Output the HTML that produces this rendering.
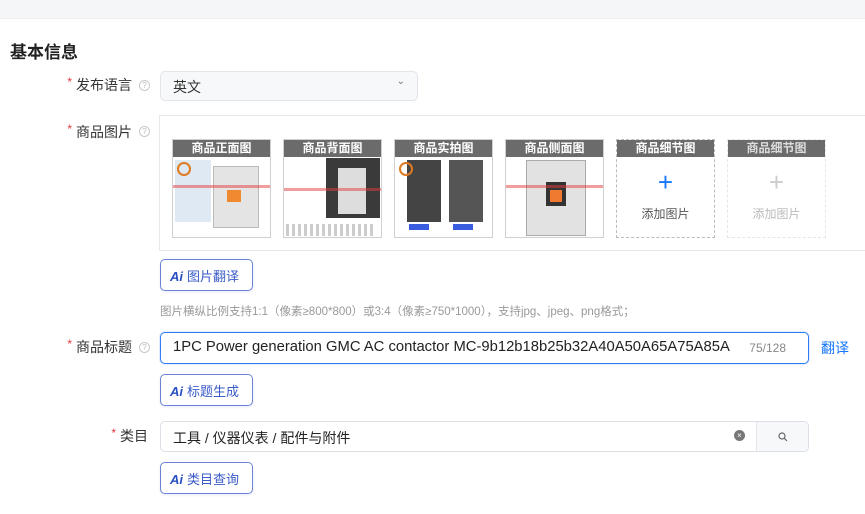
<!DOCTYPE html>
<html><head><meta charset="utf-8"><style>
*{box-sizing:border-box;margin:0;padding:0}
body{width:865px;height:514px;overflow:hidden;background:#fff;font-family:"Liberation Sans","Noto Sans CJK SC",sans-serif;color:#333;position:relative}
.abs{position:absolute}
.top{left:0;top:0;width:865px;height:19px;background:#f5f6f8;border-bottom:1px solid #eceef2}
h1{position:absolute;left:10px;top:38px;font-size:17px;font-weight:bold;color:#222}
.lab{position:absolute;font-size:14px;color:#333;text-align:right}
.lab b{color:#e4393c;font-weight:normal;margin-right:4px;font-size:12px;vertical-align:top}
.q{position:absolute;width:11px;height:11px;border:1px solid #c8c8c8;border-radius:50%;font-size:8px;color:#bbb;text-align:center;line-height:9px}
.sel{left:160px;top:71px;width:258px;height:30px;background:#f7f8fa;border:1px solid #e3e5ea;border-radius:5px;font-size:14px;padding:5px 12px;color:#333}
.panel{left:159px;top:115px;width:710px;height:136px;border:1px solid #e8e8e8;border-right:none}
.img{position:absolute;top:139px;width:99px;height:99px;border:1px solid #d0d0d0;background:#fff;overflow:hidden}
.img .h{height:17px;background:#6b6b6b;color:#fff;font-size:12px;font-weight:bold;text-align:center;line-height:17px}
.dash{border:1px dashed #bbb}
.dash2{border:1px dashed #e6e6e6}
.btn{position:absolute;left:160px;width:93px;height:32px;border:1px solid #6b83d6;border-radius:5px;font-size:13px;color:#3a5bc7;padding:6px 0 0 9px;box-shadow:0 1px 2px rgba(80,100,200,.15)}
.btn i{font-style:italic;font-weight:bold;color:#2a4fc2;margin-right:4px}
.hint{left:160px;top:303px;font-size:11.5px;color:#999}
.inp{left:160px;top:332px;width:649px;height:32px;border:1px solid #2f7cf6;border-radius:5px;font-size:14.8px;padding:6px 12px;color:#222;box-shadow:0 0 0 1px rgba(47,124,246,.15);white-space:nowrap}
.cat{left:160px;top:421px;width:649px;height:31px;border:1px solid #dcdfe6;border-radius:5px;font-size:14px;padding:6px 12px;color:#222;overflow:hidden}
</style></head><body>
<div class="abs top"></div>
<h1>基本信息</h1>

<div class="lab" style="left:60px;top:75px;width:72px"><b>*</b>发布语言</div>
<div class="q" style="left:139px;top:80px">?</div>
<div class="abs sel">英文<span style="position:absolute;right:12px;top:4px;font-size:10px;color:#777">&#8964;</span></div>

<div class="lab" style="left:60px;top:122px;width:72px"><b>*</b>商品图片</div>
<div class="q" style="left:139px;top:126px">?</div>
<div class="abs panel"></div>

<div class="img" style="left:172px"><div class="h">商品正面图</div>
<div style="position:absolute;left:2px;top:20px;width:36px;height:62px;background:#dfe9f3"></div>
<div style="position:absolute;left:4px;top:22px;width:14px;height:14px;border:2px solid #e07a20;border-radius:50%"></div>
<div style="position:absolute;left:40px;top:26px;width:46px;height:62px;background:#e4e4e4;border:1px solid #bbb"></div>
<div style="position:absolute;left:54px;top:50px;width:14px;height:12px;background:#f08a30"></div>
<div style="position:absolute;left:0;top:45px;width:99px;height:3px;background:rgba(230,60,60,.5)"></div></div>
<div class="img" style="left:283px"><div class="h">商品背面图</div>
<div style="position:absolute;left:42px;top:18px;width:54px;height:60px;background:#3a3a3a"></div>
<div style="position:absolute;left:54px;top:28px;width:28px;height:46px;background:#ddd"></div>
<div style="position:absolute;left:2px;top:84px;width:90px;height:12px;background:repeating-linear-gradient(90deg,#999 0 3px,#fff 3px 6px);opacity:.5"></div>
<div style="position:absolute;left:0;top:48px;width:99px;height:3px;background:rgba(230,60,60,.5)"></div></div>
<div class="img" style="left:394px"><div class="h">商品实拍图</div>
<div style="position:absolute;left:12px;top:20px;width:34px;height:62px;background:#444"></div>
<div style="position:absolute;left:54px;top:20px;width:34px;height:62px;background:#555"></div>
<div style="position:absolute;left:4px;top:22px;width:14px;height:14px;border:2px solid #e07a20;border-radius:50%"></div>
<div style="position:absolute;left:14px;top:84px;width:20px;height:6px;background:#3a5de0"></div>
<div style="position:absolute;left:58px;top:84px;width:20px;height:6px;background:#3a5de0"></div></div>
<div class="img" style="left:505px"><div class="h">商品侧面图</div>
<div style="position:absolute;left:20px;top:20px;width:60px;height:76px;background:#e2e2e2;border:1px solid #aaa"></div>
<div style="position:absolute;left:40px;top:42px;width:20px;height:24px;background:#333"></div>
<div style="position:absolute;left:44px;top:50px;width:12px;height:12px;background:#f07a30"></div>
<div style="position:absolute;left:0;top:45px;width:99px;height:3px;background:rgba(230,60,60,.5)"></div></div>
<div class="img dash" style="left:616px"><div class="h">商品细节图</div>
<div style="text-align:center;color:#1677ff;font-size:26px;line-height:26px;margin-top:12px">+</div>
<div style="text-align:center;font-size:12px;color:#555;margin-top:10px">添加图片</div></div>
<div class="img dash2" style="left:727px"><div class="h" style="color:#ddd">商品细节图</div>
<div style="text-align:center;color:#ccc;font-size:26px;line-height:26px;margin-top:12px">+</div>
<div style="text-align:center;font-size:12px;color:#bbb;margin-top:10px">添加图片</div></div>

<div class="btn" style="top:259px"><i>Ai</i>图片翻译</div>
<div class="abs hint">图片横纵比例支持1:1（像素≥800*800）或3:4（像素≥750*1000），支持jpg、jpeg、png格式；</div>

<div class="lab" style="left:60px;top:337px;width:72px"><b>*</b>商品标题</div>
<div class="q" style="left:139px;top:342px">?</div>
<div class="abs inp">1PC Power generation GMC AC contactor MC-9b12b18b25b32A40A50A65A75A85A<span style="position:absolute;right:22px;top:8px;font-size:12px;color:#888">75/128</span></div>
<div class="abs" style="left:821px;top:338px;font-size:14px;color:#1677ff">翻译</div>
<div class="btn" style="top:374px"><i>Ai</i>标题生成</div>

<div class="lab" style="left:90px;top:426px;width:58px"><b>*</b>类目</div>
<div class="abs cat">工具 / 仪器仪表 / 配件与附件
<span style="position:absolute;left:573px;top:8px;width:11px;height:11px;border-radius:50%;background:#777;color:#fff;font-size:8px;line-height:11px;text-align:center">×</span>
<span style="position:absolute;left:595px;top:0;width:53px;height:29px;background:#f7f8fa;border-left:1px solid #e3e5ea">
<svg width="10" height="10" viewBox="0 0 10 10" style="position:absolute;left:21px;top:10px"><circle cx="4" cy="4" r="3" fill="none" stroke="#666" stroke-width="1.2"/><path d="M6.2 6.2L9 9" stroke="#666" stroke-width="1.2"/></svg></span></div>
<div class="btn" style="top:462px"><i>Ai</i>类目查询</div>
</body></html>
